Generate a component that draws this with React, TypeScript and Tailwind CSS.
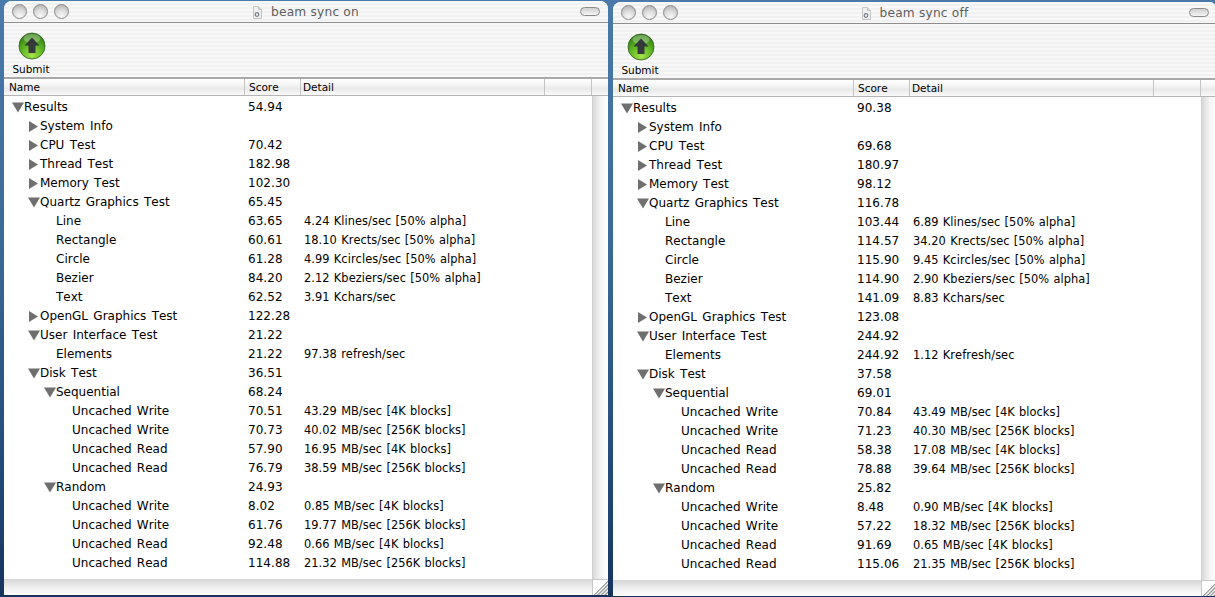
import React from "react";

const labels: Array<[string, number, ("o" | "c")?]> = [
  ["Results", 0, "o"],
  ["System Info", 1, "c"],
  ["CPU Test", 1, "c"],
  ["Thread Test", 1, "c"],
  ["Memory Test", 1, "c"],
  ["Quartz Graphics Test", 1, "o"],
  ["Line", 2],
  ["Rectangle", 2],
  ["Circle", 2],
  ["Bezier", 2],
  ["Text", 2],
  ["OpenGL Graphics Test", 1, "c"],
  ["User Interface Test", 1, "o"],
  ["Elements", 2],
  ["Disk Test", 1, "o"],
  ["Sequential", 2, "o"],
  ["Uncached Write", 3],
  ["Uncached Write", 3],
  ["Uncached Read", 3],
  ["Uncached Read", 3],
  ["Random", 2, "o"],
  ["Uncached Write", 3],
  ["Uncached Write", 3],
  ["Uncached Read", 3],
  ["Uncached Read", 3],
];

const on: Array<[string, string?]> = [
  ["54.94"], [""], ["70.42"], ["182.98"], ["102.30"], ["65.45"],
  ["63.65", "4.24 Klines/sec [50% alpha]"],
  ["60.61", "18.10 Krects/sec [50% alpha]"],
  ["61.28", "4.99 Kcircles/sec [50% alpha]"],
  ["84.20", "2.12 Kbeziers/sec [50% alpha]"],
  ["62.52", "3.91 Kchars/sec"],
  ["122.28"], ["21.22"],
  ["21.22", "97.38 refresh/sec"],
  ["36.51"], ["68.24"],
  ["70.51", "43.29 MB/sec [4K blocks]"],
  ["70.73", "40.02 MB/sec [256K blocks]"],
  ["57.90", "16.95 MB/sec [4K blocks]"],
  ["76.79", "38.59 MB/sec [256K blocks]"],
  ["24.93"],
  ["8.02", "0.85 MB/sec [4K blocks]"],
  ["61.76", "19.77 MB/sec [256K blocks]"],
  ["92.48", "0.66 MB/sec [4K blocks]"],
  ["114.88", "21.32 MB/sec [256K blocks]"],
];

const off: Array<[string, string?]> = [
  ["90.38"], [""], ["69.68"], ["180.97"], ["98.12"], ["116.78"],
  ["103.44", "6.89 Klines/sec [50% alpha]"],
  ["114.57", "34.20 Krects/sec [50% alpha]"],
  ["115.90", "9.45 Kcircles/sec [50% alpha]"],
  ["114.90", "2.90 Kbeziers/sec [50% alpha]"],
  ["141.09", "8.83 Kchars/sec"],
  ["123.08"], ["244.92"],
  ["244.92", "1.12 Krefresh/sec"],
  ["37.58"], ["69.01"],
  ["70.84", "43.49 MB/sec [4K blocks]"],
  ["71.23", "40.30 MB/sec [256K blocks]"],
  ["58.38", "17.08 MB/sec [4K blocks]"],
  ["78.88", "39.64 MB/sec [256K blocks]"],
  ["25.82"],
  ["8.48", "0.90 MB/sec [4K blocks]"],
  ["57.22", "18.32 MB/sec [256K blocks]"],
  ["91.69", "0.65 MB/sec [4K blocks]"],
  ["115.06", "21.35 MB/sec [256K blocks]"],
];

const indent = ["pl-[8px]", "pl-[24px]", "pl-[40px]", "pl-[56px]"];
const textIndent = ["pl-[20px]", "pl-[36px]", "pl-[52px]", "pl-[68px]"];

const stripes =
  "bg-[repeating-linear-gradient(to_bottom,#f8f8f8_0px,#f8f8f8_2px,#f1f1f1_2px,#f1f1f1_4px)]";

function Triangle({ open }: { open: boolean }) {
  return (
    <svg width="12" height="12" viewBox="0 0 12 12" className="shrink-0">
      {open ? (
        <polygon points="0,0.5 12,0.5 6,10.5" fill="#6f6f6f" />
      ) : (
        <polygon points="1,0 10,5.5 1,11" fill="#6f6f6f" />
      )}
    </svg>
  );
}

function Light() {
  return (
    <div className="h-[15px] w-[15px] rounded-full border border-[#8a8a8a] bg-[radial-gradient(circle_at_50%_85%,#f8f8f8_0%,#dedede_45%,#a8a8a8_100%)]" />
  );
}

function DocIcon() {
  return (
    <svg width="9" height="13" viewBox="0 0 9 13" className="shrink-0">
      <path d="M0.5 0.5H5.5L8.5 3.5V12.5H0.5Z" fill="#f0f0f0" stroke="#c4c4c4" />
      <path d="M5.5 0.5V3.5H8.5" fill="#dcdcdc" stroke="#c4c4c4" />
      <circle cx="4" cy="8.5" r="1.8" fill="none" stroke="#77808f" strokeWidth="1.2" />
    </svg>
  );
}

function SubmitIcon({ id }: { id: string }) {
  return (
    <svg width="28" height="28" viewBox="0 0 28 28" className="ml-[2px]">
      <defs>
        <radialGradient id={id} cx="50%" cy="85%" r="80%">
          <stop offset="0%" stopColor="#a6e34a" />
          <stop offset="55%" stopColor="#5cb322" />
          <stop offset="100%" stopColor="#2f7d12" />
        </radialGradient>
      </defs>
      <circle cx="14" cy="14" r="13" fill={`url(#${id})`} stroke="#2d5f1c" strokeWidth="0.8" />
      <ellipse cx="14" cy="6.5" rx="8.5" ry="4.5" fill="#ffffff" opacity="0.3" />
      <path d="M14 5.5L21.5 13.5H17.5V21H10.5V13.5H6.5Z" fill="#34393a" />
    </svg>
  );
}

function Window({
  title,
  data,
  gid,
  offset,
}: {
  title: string;
  data: Array<[string, string?]>;
  gid: string;
  offset: string;
}) {
  return (
    <div
      className={`${offset} flex h-[594px] w-[604px] shrink-0 flex-col overflow-hidden rounded-t-[8px] bg-white [font-kerning:none]`}
    >
      <div className={`${stripes} flex h-[22px] shrink-0 items-center border-b border-[#8d8d8d]`}>
        <div className="flex w-[90px] gap-[6px] pl-[8px]">
          <Light />
          <Light />
          <Light />
        </div>
        <div className="flex flex-1 items-center justify-center gap-[9px] pt-[2px] text-[12.2px] tracking-[0.2px] text-[#5e5e5e]">
          <DocIcon />
          <span>{title}</span>
        </div>
        <div className="flex w-[90px] justify-end pr-[8px]">
          <div className="h-[9px] w-[20px] rounded-full border border-[#8a8a8a] bg-[linear-gradient(to_bottom,#cfcfcf,#f5f5f5)]" />
        </div>
      </div>
      <div className={`${stripes} flex h-[56px] shrink-0 flex-col border-b-2 border-[#a9a9a9]`}>
        <div className="flex w-[54px] flex-col items-center pt-[9px]">
          <SubmitIcon id={gid} />
          <span className="mt-[3px] text-[10.5px] leading-[13px] text-black">Submit</span>
        </div>
      </div>
      <div className="flex h-[17px] shrink-0 border-b border-[#b4b4b4] bg-[linear-gradient(to_bottom,#ffffff_0%,#f3f3f3_40%,#e9e9e9_60%,#fafafa_100%)] text-[10.5px] leading-[17px] text-black">
        <div className="w-[241px] border-r border-[#c4c4c4] pl-[5px]">Name</div>
        <div className="w-[56px] border-r border-[#c4c4c4] pl-[4px]">Score</div>
        <div className="w-[244px] border-r border-[#c4c4c4] pl-[2px]">Detail</div>
        <div className="w-[47px] border-r border-[#c4c4c4]" />
      </div>
      <div className="flex min-h-0 flex-1">
        <div className="flex w-[588px] flex-col pt-[2px]">
          {labels.map(([n, l, t], i) => (
            <div key={i} className="flex h-[19px] shrink-0 items-center text-[12px] leading-[19px] text-black">
              <div className={`flex w-[241px] items-center [word-spacing:1.5px] ${t ? indent[l] : textIndent[l]}`}>
                {t ? <Triangle open={t === "o"} /> : null}
                <span>{n}</span>
              </div>
              <div className="w-[56px] pl-[3px] tracking-[0.05px]">{data[i][0]}</div>
              <div className="pl-[3px] text-[11.4px] tracking-[0.05px] [word-spacing:0.6px]">{data[i][1]}</div>
            </div>
          ))}
        </div>
        <div className="w-[16px] shrink-0 border-l border-[#d0d0d0] bg-[linear-gradient(to_right,#d9d9d9,#f4f4f4_50%,#ffffff)]" />
      </div>
      <div className="flex h-[16px] shrink-0">
        <div className="w-[588px] bg-[linear-gradient(to_bottom,#d6d6d6,#f2f2f2_60%,#fcfcfc)]" />
        <div className="w-[16px] border-l border-t border-[#c8c8c8] bg-[linear-gradient(135deg,#ffffff_0%,#ffffff_50%,#8f8f8f_54%,#ffffff_60%,#8f8f8f_66%,#ffffff_72%,#8f8f8f_78%,#ffffff_84%,#8f8f8f_90%,#ffffff_96%)]" />
      </div>
    </div>
  );
}

export default function App() {
  return (
    <div className="flex h-[597px] w-[1215px] gap-[5px] overflow-hidden bg-[linear-gradient(to_bottom,#4a7aa9_0%,#3a6a9a_40%,#1f4474_85%,#16335c_100%)] pl-[4px] font-['DejaVu_Sans','Liberation_Sans',sans-serif]">
      <Window title="beam sync on" data={on} gid="g1" offset="mt-[1px]" />
      <Window title="beam sync off" data={off} gid="g2" offset="mt-[2px]" />
    </div>
  );
}
